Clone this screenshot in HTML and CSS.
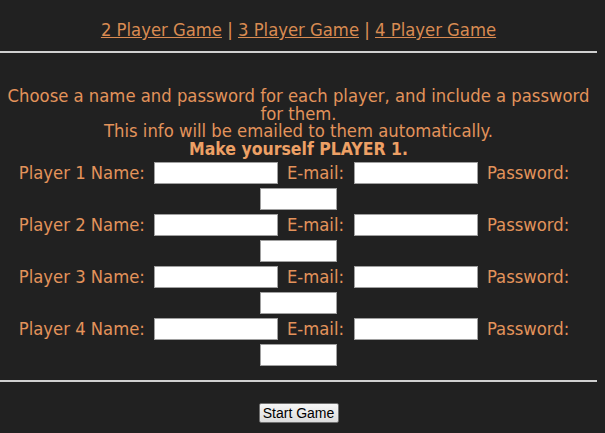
FILE: index.html
```html
<!DOCTYPE html>
<html lang="en">
<head>
  <meta charset="UTF-8">
  <title>New Game</title>
  <link rel="stylesheet" href="styles.css">
</head>
<body>
  <div class="page">
    <!-- Game size links -->
    <p class="nav">
      <a href="#">2 Player Game</a> | <a href="#">3 Player Game</a> | <a href="#">4 Player Game</a>
    </p>
    <hr>
    <form class="game-form">
      <p class="intro">
        Choose a name and password for each player, and include a password for them.<br>
        This info will be emailed to them automatically.<br>
        <b>Make yourself PLAYER 1.</b>
      </p>
      <!-- One row per player -->
      <div class="players">
        <div class="player">
          <label class="lbl-name" for="name1">Player 1 Name:</label>
          <input class="in-name" type="text" id="name1">
          <label class="lbl-mail" for="mail1">E-mail:</label>
          <input class="in-mail" type="text" id="mail1">
          <label class="lbl-pass" for="pass1">Password:</label>
          <input class="in-pass" type="password" id="pass1">
        </div>
        <div class="player">
          <label class="lbl-name" for="name2">Player 2 Name:</label>
          <input class="in-name" type="text" id="name2">
          <label class="lbl-mail" for="mail2">E-mail:</label>
          <input class="in-mail" type="text" id="mail2">
          <label class="lbl-pass" for="pass2">Password:</label>
          <input class="in-pass" type="password" id="pass2">
        </div>
        <div class="player">
          <label class="lbl-name" for="name3">Player 3 Name:</label>
          <input class="in-name" type="text" id="name3">
          <label class="lbl-mail" for="mail3">E-mail:</label>
          <input class="in-mail" type="text" id="mail3">
          <label class="lbl-pass" for="pass3">Password:</label>
          <input class="in-pass" type="password" id="pass3">
        </div>
        <div class="player">
          <label class="lbl-name" for="name4">Player 4 Name:</label>
          <input class="in-name" type="text" id="name4">
          <label class="lbl-mail" for="mail4">E-mail:</label>
          <input class="in-mail" type="text" id="mail4">
          <label class="lbl-pass" for="pass4">Password:</label>
          <input class="in-pass" type="password" id="pass4">
        </div>
      </div>
      <hr>
      <div class="actions">
        <button type="submit" class="start-btn">Start Game</button>
      </div>
    </form>
  </div>
</body>
</html>
```

FILE: styles.css
```css
/* Dark page, orange text */
body {
  margin: 0;
  background-color: #212121;
  font-family: "DejaVu Sans Condensed", "DejaVu Sans", sans-serif;
  font-size: 18.3px;
  color: #e3935b;
}
.page {
  width: 597px;
  padding-top: 20px;
  text-align: center;
}
.nav {
  margin: 0;
  line-height: 20px;
}
.nav a {
  color: #d98b52;
}
hr {
  height: 0;
  margin: 11px 0 0;
  border: 0;
  border-top: 2px solid #d0d0d0;
}
.intro {
  margin: 34px 0 0;
  line-height: 17.5px;
}
.intro b {
  font-size: 17.5px;
  color: #eda065;
}
.players {
  margin-top: 4px;
}
/* each player: first line labels + inputs, password box wraps below */
.player {
  display: flex;
  flex-wrap: wrap;
  justify-content: center;
  align-items: center;
  row-gap: 4px;
  margin-bottom: 4px;
}
.player label {
  line-height: 20px;
}
.player input {
  box-sizing: border-box;
  height: 22px;
  margin: 0;
  border: 1px solid #a0a0a0;
  background: #fff;
}
.lbl-name { margin-right: 9px; }
.in-name { width: 124px; margin-right: 9px !important; }
.lbl-mail { margin-right: 10px; }
.in-mail { width: 124px; margin-right: 9px !important; }
.lbl-pass { margin-right: 9px; }
.in-pass { width: 77px; }
.game-form hr {
  margin-top: 14px;
}
.actions {
  padding-top: 19px;
}
.start-btn {
  width: 80px;
  height: 20px;
  padding: 0;
  font-family: "Liberation Sans", Arial, sans-serif;
  font-size: 14px;
  color: #000;
  background: linear-gradient(#f6f6f6, #dcdcdc);
  border: 1px solid #707070;
  border-radius: 2px;
}
```
